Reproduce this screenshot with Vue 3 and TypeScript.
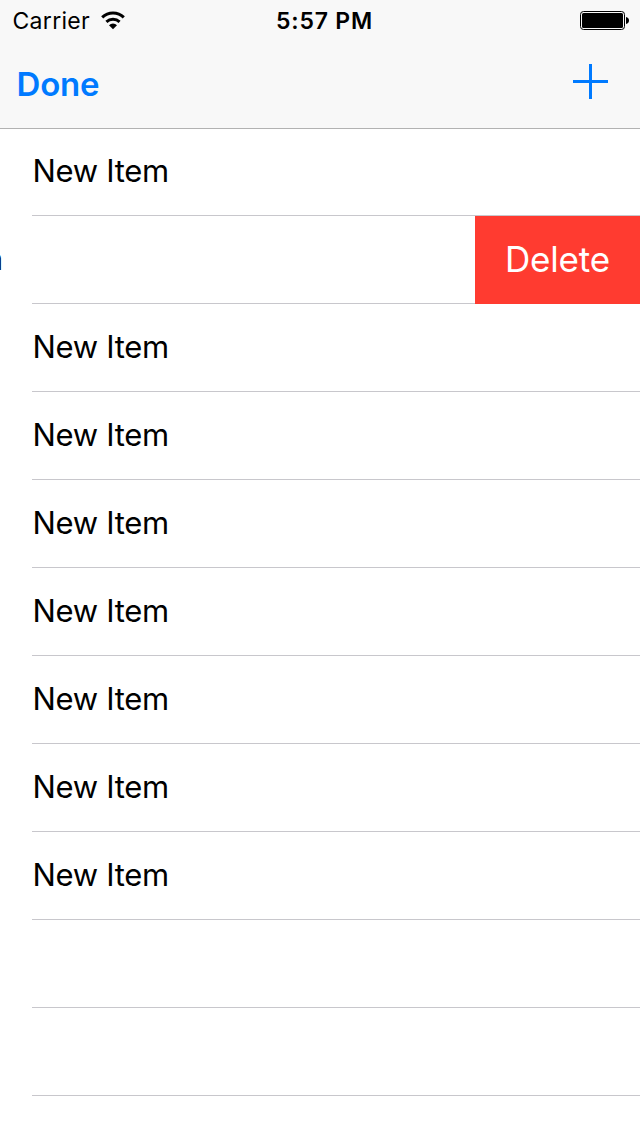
<script setup lang="ts">
interface Row {
  title: string
  swiped: boolean
}

const rows: Row[] = Array.from({ length: 11 }, (_, i) => ({
  title: i < 9 ? 'New Item' : '',
  swiped: i === 1,
}))
</script>

<template>
  <div class="screen">
    <header class="top">
      <div class="status">
        <div class="network">
          <span class="carrier">Carrier</span>
          <svg class="wifi" width="24" height="19" viewBox="0 0 24 19">
            <path d="M1.200 6.400a15.500 15.500 0 0 1 21.600 0" fill="none" stroke="#000" stroke-width="3" />
            <path d="M5.400 10.900a9.600 9.600 0 0 1 13.200 0" fill="none" stroke="#000" stroke-width="2.900" />
            <path d="M12 18.200 8 14.200a5.700 5.700 0 0 1 8 0z" fill="#000" />
          </svg>
        </div>
        <span class="time">5:57 PM</span>
        <svg class="battery" width="49" height="19" viewBox="0 0 49 19">
          <rect x=".5" y=".5" width="44" height="18" rx="3" fill="none" stroke="#000" />
          <rect x="2" y="2" width="41" height="15" rx="1.500" fill="#000" />
          <path d="M46 6c4 .8 4 6.200 0 7z" fill="#000" />
        </svg>
      </div>
      <nav class="nav">
        <button class="done">Done</button>
        <button class="add" aria-label="Add">
          <svg width="35" height="35" viewBox="0 0 35 35">
            <path d="M0 17.500h35M17.500 0v35" stroke="#007aff" stroke-width="3" />
          </svg>
        </button>
      </nav>
    </header>
    <ul class="list">
      <li v-for="(row, i) in rows" :key="i" class="row" :class="{ swiped: row.swiped }">
        <div class="cell"><span class="title">{{ row.title }}</span></div>
        <button v-if="row.swiped" class="delete">Delete</button>
      </li>
    </ul>
  </div>
</template>

<style>
body {
  margin: 0;
  background: #fff;
}
</style>

<style scoped>
.screen {
  width: 640px;
  height: 1136px;
  overflow: hidden;
  background: #fff;
  color: #000;
  font-family: Inter, "Liberation Sans", sans-serif;
}
button {
  margin: 0;
  padding: 0;
  border: 0;
  background: none;
  font-family: inherit;
}
.top {
  box-sizing: border-box;
  height: 129px;
  background: #f8f8f8;
  border-bottom: 1px solid #b2b2b2;
}
.status {
  display: grid;
  grid-template-columns: 1fr auto 1fr;
  align-items: center;
  height: 40px;
  padding: 0 11px 0 12px;
}
.network {
  display: flex;
  align-items: center;
}
.carrier {
  padding: 2px 0 0 0.5px;
  font-size: 23px;
  line-height: 38px;
  letter-spacing: 0.3px;
}
.wifi {
  margin-left: 10.5px;
}
.time {
  padding: 2px 0 0 8px;
  font-size: 23px;
  font-weight: 600;
  line-height: 38px;
  letter-spacing: 0.8px;
}
.battery {
  justify-self: end;
}
.nav {
  display: flex;
  justify-content: space-between;
  align-items: center;
  height: 88px;
  padding: 0 32px 0 16.5px;
}
.done {
  color: #007aff;
  font-size: 33px;
  font-weight: 600;
  line-height: 88px;
  letter-spacing: -0.2px;
}
.add {
  height: 35px;
  margin-top: -5px;
}
.add svg {
  display: block;
}
.list {
  margin: -1px 0 0;
  padding: 0;
  list-style: none;
}
.row {
  display: flex;
  box-sizing: border-box;
  height: 88px;
  padding-left: 32px;
}
.cell {
  flex: 1;
  box-sizing: border-box;
  min-width: 0;
  border-bottom: 1px solid #c8c7cc;
}
.title {
  display: block;
  padding-left: 0.5px;
  font-size: 31px;
  line-height: 85px;
  letter-spacing: -0.3px;
  white-space: nowrap;
}
.swiped .title {
  margin-left: -166px;
}
.delete {
  width: 165px;
  height: 88px;
  padding-bottom: 2px;
  background: #ff3b30;
  color: #fff;
  font-size: 35px;
  line-height: 86px;
  letter-spacing: -0.2px;
}
</style>
